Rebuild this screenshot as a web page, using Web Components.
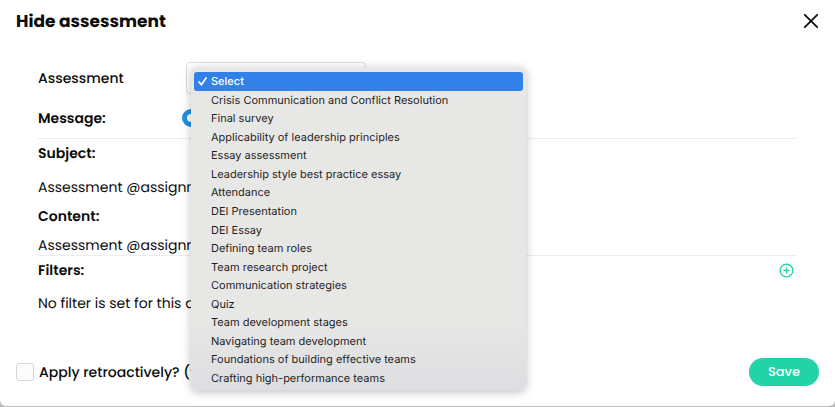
<!DOCTYPE html>
<html lang="en">
<head>
<meta charset="utf-8">
<title>Hide assessment</title>
<style>
html {
	background: #bdbdbf;
}
body {
	margin: 0;
	font-family: Poppins, Inter, "Open Sans", sans-serif;
	font-size: 14px;
	line-height: 20px;
	text-rendering: geometricPrecision;
	color: #0c0c0c;
	--line: #ececf8;
	--accent: #21d3a6;
	--blue: #3181e8;
}
</style>
</head>
<body>
<hide-assessment></hide-assessment>

<script>
//#region FORM ROW
const formRow_template = document.createElement("template");
formRow_template.innerHTML = /* html */ `
<style>
:host {
	display: grid;
	grid-template-columns: 144px 1fr auto;
	align-items: center;
}
.label {
	font-weight: 600;
}
</style>
<div class="label"><slot name="label"></slot></div>
<div><slot></slot></div>
<slot name="action"></slot>
`;

window.customElements.define(
	"form-row",
	class extends HTMLElement {
		constructor() {
			super();
			this._shadowRoot = this.attachShadow({mode: "open"});
			this._shadowRoot.appendChild(formRow_template.content.cloneNode(true));
		}
	}
);
//#endregion FORM ROW

//#region OPTION MENU
const optionMenu_template = document.createElement("template");
optionMenu_template.innerHTML = /* html */ `
<style>
:host {
	display: block;
	box-sizing: border-box;
	width: 335px;
	padding: 5px 3px 3px;
	border-radius: 6px;
	background: linear-gradient(#e7e7e5 78%, #dddee1);
	box-shadow: 0 2px 10px rgba(0, 0, 0, 0.26);
	font-family: Inter, sans-serif;
	font-size: 11px;
	color: #1f1f1f;
}
ul {
	display: grid;
	grid-auto-rows: minmax(18px, 1fr);
	height: 315px;
	margin: 0;
	padding: 0;
	list-style: none;
}
li {
	display: flex;
	align-items: center;
	padding-left: 17px;
	border-radius: 3px;
}
li[aria-selected="true"] {
	padding-left: 4px;
	background: var(--blue);
	color: #fff;
	font-weight: 500;
}
svg {
	width: 9px;
	height: 9px;
	margin-right: 4px;
}
</style>
<ul role="listbox" aria-label="Assessment"></ul>
`;

window.customElements.define(
	"option-menu",
	class extends HTMLElement {
		constructor() {
			super();
			this._shadowRoot = this.attachShadow({mode: "open"});
			this._shadowRoot.appendChild(optionMenu_template.content.cloneNode(true));
			this.$list = this._shadowRoot.querySelector("ul");
		}

		set options(names) {
			this.$list.innerHTML = names
				.map((name, i) =>
					i === 0
						? `<li role="option" aria-selected="true"><svg viewBox="0 0 9 9" fill="none" stroke="currentColor" stroke-width="1.7" stroke-linecap="round" stroke-linejoin="round" aria-hidden="true"><path d="M1 5 3.4 7.8 8 1"/></svg>${name}</li>`
						: `<li role="option" aria-selected="false">${name}</li>`
				)
				.join("");
		}
	}
);
//#endregion OPTION MENU

//#region DIALOG
const hideAssessment_template = document.createElement("template");
hideAssessment_template.innerHTML = /* html */ `
<style>
:host {
	display: block;
	box-sizing: border-box;
	min-height: calc(100vh - 1px);
	border-radius: 0 0 6px 6px;
	background: #fff;
}
header, footer {
	display: flex;
	align-items: center;
	justify-content: space-between;
	padding: 0 16px;
}
header {
	height: 42px;
}
h1 {
	margin: 0;
	font-size: 17px;
	font-weight: 700;
}
button {
	display: block;
	padding: 0;
	border: 0;
	background: none;
	font: inherit;
	color: inherit;
}
svg {
	display: block;
}
main {
	padding: 20px 38px 0;
}
.assessment {
	height: 32px;
}
.assessment label {
	font-weight: 500;
}
.picker {
	position: relative;
	width: 180px;
	margin-left: 4px;
}
select {
	display: block;
	box-sizing: border-box;
	width: 100%;
	height: 32px;
	padding: 0 12px;
	border: 1px solid #dcdce8;
	border-radius: 4px;
	background: #fff;
	appearance: none;
	font: inherit;
	color: inherit;
}
option-menu {
	position: absolute;
	z-index: 1;
	top: 5px;
	left: 5px;
}
.message {
	height: 40px;
	padding-top: 4px;
	border-bottom: 1px solid var(--line);
}
.message input {
	display: block;
	box-sizing: border-box;
	width: 18px;
	height: 18px;
	margin: 0;
	border: 5px solid #2190e0;
	border-radius: 50%;
	appearance: none;
}
h2, p {
	margin: 0;
	font-size: 14px;
}
h2 {
	font-weight: 600;
}
.text {
	padding-top: 4px;
	border-bottom: 1px solid var(--line);
}
.text p {
	padding: 14px 0 9px;
}
.text p:last-child {
	padding: 9px 0 0;
}
.filters {
	height: 28px;
}
.filters svg {
	margin-right: 3px;
	color: var(--accent);
}
.empty {
	padding: 9px 0 45px;
}
footer label {
	display: flex;
	align-items: center;
	gap: 5px;
	font-weight: 500;
}
label input {
	box-sizing: border-box;
	width: 18px;
	height: 18px;
	margin: 0;
	border: 1px solid #d5d5e2;
	border-radius: 3px;
	background: #fcfcfd;
	appearance: none;
}
.save {
	width: 70px;
	height: 28px;
	border-radius: 14px;
	background: var(--accent);
	font-size: 13px;
	font-weight: 500;
	color: #fff;
}
</style>
<header>
	<h1>Hide assessment</h1>
	<button type="button" aria-label="Close">
		<svg width="16" height="16" viewBox="0 0 16 16" fill="none" stroke="currentColor" stroke-width="1.8" stroke-linecap="round"><path d="M1.8 1.8 14.2 14.2M14.2 1.8 1.8 14.2"/></svg>
	</button>
</header>
<main>
	<form-row class="assessment">
		<label slot="label" for="assessment">Assessment</label>
		<div class="picker">
			<select id="assessment" aria-label="Assessment"></select>
			<option-menu></option-menu>
		</div>
	</form-row>
	<form-row class="message">
		<label slot="label" for="message">Message:</label>
		<input id="message" type="radio" checked>
	</form-row>
	<section class="text">
		<h2>Subject:</h2>
		<p>Assessment @assignm</p>
		<h2>Content:</h2>
		<p>Assessment @assignm</p>
	</section>
	<form-row class="filters">
		<h2 slot="label">Filters:</h2>
		<button slot="action" type="button" aria-label="Add filter">
			<svg width="15" height="15" viewBox="0 0 15 15" fill="none" stroke="currentColor" stroke-width="1.3" stroke-linecap="round"><circle cx="7.5" cy="7.5" r="6.4"/><path d="M7.5 4.9v5.2M4.9 7.5h5.2"/></svg>
		</button>
	</form-row>
	<p class="empty">No filter is set for this a</p>
</main>
<footer>
	<label><input type="checkbox">Apply retroactively? (t</label>
	<button class="save" type="button">Save</button>
</footer>
`;

const assessments = [
	"Select",
	"Crisis Communication and Conflict Resolution",
	"Final survey",
	"Applicability of leadership principles",
	"Essay assessment",
	"Leadership style best practice essay",
	"Attendance",
	"DEI Presentation",
	"DEI Essay",
	"Defining team roles",
	"Team research project",
	"Communication strategies",
	"Quiz",
	"Team development stages",
	"Navigating team development",
	"Foundations of building effective teams",
	"Crafting high-performance teams",
];

window.customElements.define(
	"hide-assessment",
	class extends HTMLElement {
		constructor() {
			super();
			this._shadowRoot = this.attachShadow({mode: "open"});
			this._shadowRoot.appendChild(
				hideAssessment_template.content.cloneNode(true)
			);
			this.$menu = this._shadowRoot.querySelector("option-menu");
			this.$select = this._shadowRoot.querySelector("select");
		}

		connectedCallback() {
			this.$menu.options = assessments;
			this.$select.addEventListener("change", (e) => {
				this.assessment = e.target.value;
			});
		}
	}
);
//#endregion DIALOG
</script>
</body>
</html>
